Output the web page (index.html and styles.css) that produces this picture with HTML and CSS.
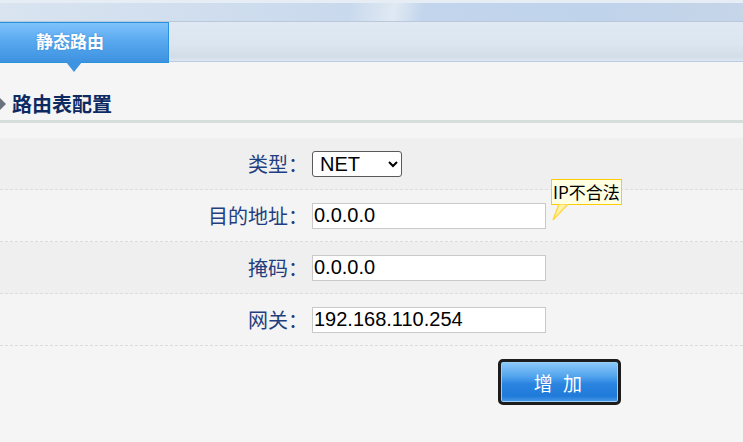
FILE: index.html
```html
<!DOCTYPE html>
<html lang="zh-CN">
<head>
  <meta charset="UTF-8" />
  <title>静态路由</title>
  <meta name="viewport" content="width=device-width, initial-scale=1.0" />
  <link rel="stylesheet" href="styles.css">
</head>
<body>
  <div class="header">
    <div class="topband"></div>
    <div class="tabbar">
      <div class="tab">静态路由</div>
    </div>
  </div>

  <div class="section-title">
    <span class="arrow"></span>
    <span>路由表配置</span>
  </div>

  <form class="route-form" onsubmit="return false">
    <div class="row odd">
      <label class="label" for="type">类型：</label>
      <div class="field">
        <select id="type" class="select">
          <option>NET</option>
          <option>HOST</option>
        </select>
      </div>
    </div>
    <div class="row">
      <label class="label" for="dest">目的地址：</label>
      <div class="field">
        <input id="dest" class="text" type="text" value="0.0.0.0" />
        <div class="tip">
          IP不合法
          <svg class="tip-tail" width="18" height="17" viewBox="0 0 18 17">
            <polygon points="7,0 16,0 1,16" fill="#fff3a8" stroke="#ffd84a" stroke-width="1.5" />
          </svg>
        </div>
      </div>
    </div>
    <div class="row odd">
      <label class="label" for="mask">掩码：</label>
      <div class="field">
        <input id="mask" class="text" type="text" value="0.0.0.0" />
      </div>
    </div>
    <div class="row">
      <label class="label" for="gw">网关：</label>
      <div class="field">
        <input id="gw" class="text" type="text" value="192.168.110.254" />
      </div>
    </div>
    <div class="actions">
      <button class="btn" type="submit">增 加</button>
    </div>
  </form>
</body>
</html>
```

FILE: styles.css
```css
* {
  box-sizing: border-box;
}

body {
  margin: 0;
  background: #f5f5f5;
  font-family: "Noto Sans CJK SC", "Liberation Sans", sans-serif;
  width: 743px;
  height: 442px;
  overflow: hidden;
}

/* header */
.topband {
  height: 22px;
  border-top: 3px solid #e7edf5;
  border-bottom: 1px solid #b9c9db;
  background: linear-gradient(100deg, #d9e4f0 0%, #c9d9ed 47%, #e0e9f3 53%, #c2d5ec 57%, #bfd3eb 80%, #c6d5e8 100%);
}

.tabbar {
  height: 40px;
  background: linear-gradient(#dfe8f3 0%, #dce6f1 55%, #d3dde8 90%, #dfe8f2 100%);
  border-bottom: 1px solid #b9cce3;
}

.tab {
  position: relative;
  width: 169px;
  height: 41px;
  border: 1px solid #2a91dc;
  border-left: none;
  background: linear-gradient(#7fc3fc 0%, #5aa9f0 45%, #3d92e0 100%);
  color: #fff;
  font-weight: bold;
  font-size: 17px;
  line-height: 35px;
  text-align: center;
  padding-right: 28px;
  text-shadow: 0 0 2px #3b86d0;
}

.tab::after {
  content: "";
  position: absolute;
  left: 66px;
  top: 39px;
  border-left: 8px solid transparent;
  border-right: 8px solid transparent;
  border-top: 10px solid #3e93e0;
}

/* section */
.section-title {
  display: flex;
  align-items: center;
  gap: 6px;
  margin-top: 28px;
  height: 33px;
  border-bottom: 3px solid #d6dedc;
  color: #0e2a63;
  font-size: 20px;
  font-weight: bold;
  padding-bottom: 3px;
}

.arrow {
  width: 0;
  height: 0;
  border-top: 6px solid transparent;
  border-bottom: 6px solid transparent;
  border-left: 6px solid #6b7380;
}

.route-form {
  margin-top: 15px;
}

.row {
  display: grid;
  grid-template-columns: 308px 1fr;
  column-gap: 4px;
  align-items: center;
  height: 52px;
  border-bottom: 1px dashed #dcdcdc;
  background: #f4f4f4;
}

.row.odd {
  background: #efefef;
}

.label {
  text-align: right;
  color: #1f3f80;
  font-size: 20px;
}

.field {
  position: relative;
}

.text {
  display: block;
  width: 234px;
  height: 26px;
  border: 1px solid #c9c9c9;
  background: #fff;
  padding: 0 1px;
  font-family: "Liberation Sans", sans-serif;
  font-size: 20px;
  color: #000;
}

.select {
  display: block;
  width: 90px;
  height: 26px;
  border: 1px solid #5a5a5a;
  border-radius: 3px;
  background: #fff;
  padding: 0 3px;
  font-family: "Liberation Sans", sans-serif;
  font-size: 20px;
  color: #000;
}

.tip {
  position: absolute;
  left: 239px;
  top: -24px;
  height: 26px;
  padding: 0 1px;
  border: 1px solid #ffcc00;
  background: #ffffe1;
  font-size: 17px;
  line-height: 23px;
  color: #000;
  white-space: nowrap;
}

.tip-tail {
  position: absolute;
  left: 0;
  top: 24px;
}

.actions {
  padding: 13px 0 0 498px;
}

.btn {
  width: 123px;
  height: 46px;
  border: 3px solid #1c1c1c;
  border-radius: 5px;
  background: linear-gradient(#8ccbfa 0%, #54a5ee 35%, #2a84e0 55%, #1f7ad9 85%, #4d9be6 100%);
  box-shadow: inset 0 0 0 1px #9dd0f7;
  color: #fff;
  font-family: "Noto Sans CJK SC", sans-serif;
  font-size: 19px;
  letter-spacing: 3px;
  cursor: pointer;
}
```
